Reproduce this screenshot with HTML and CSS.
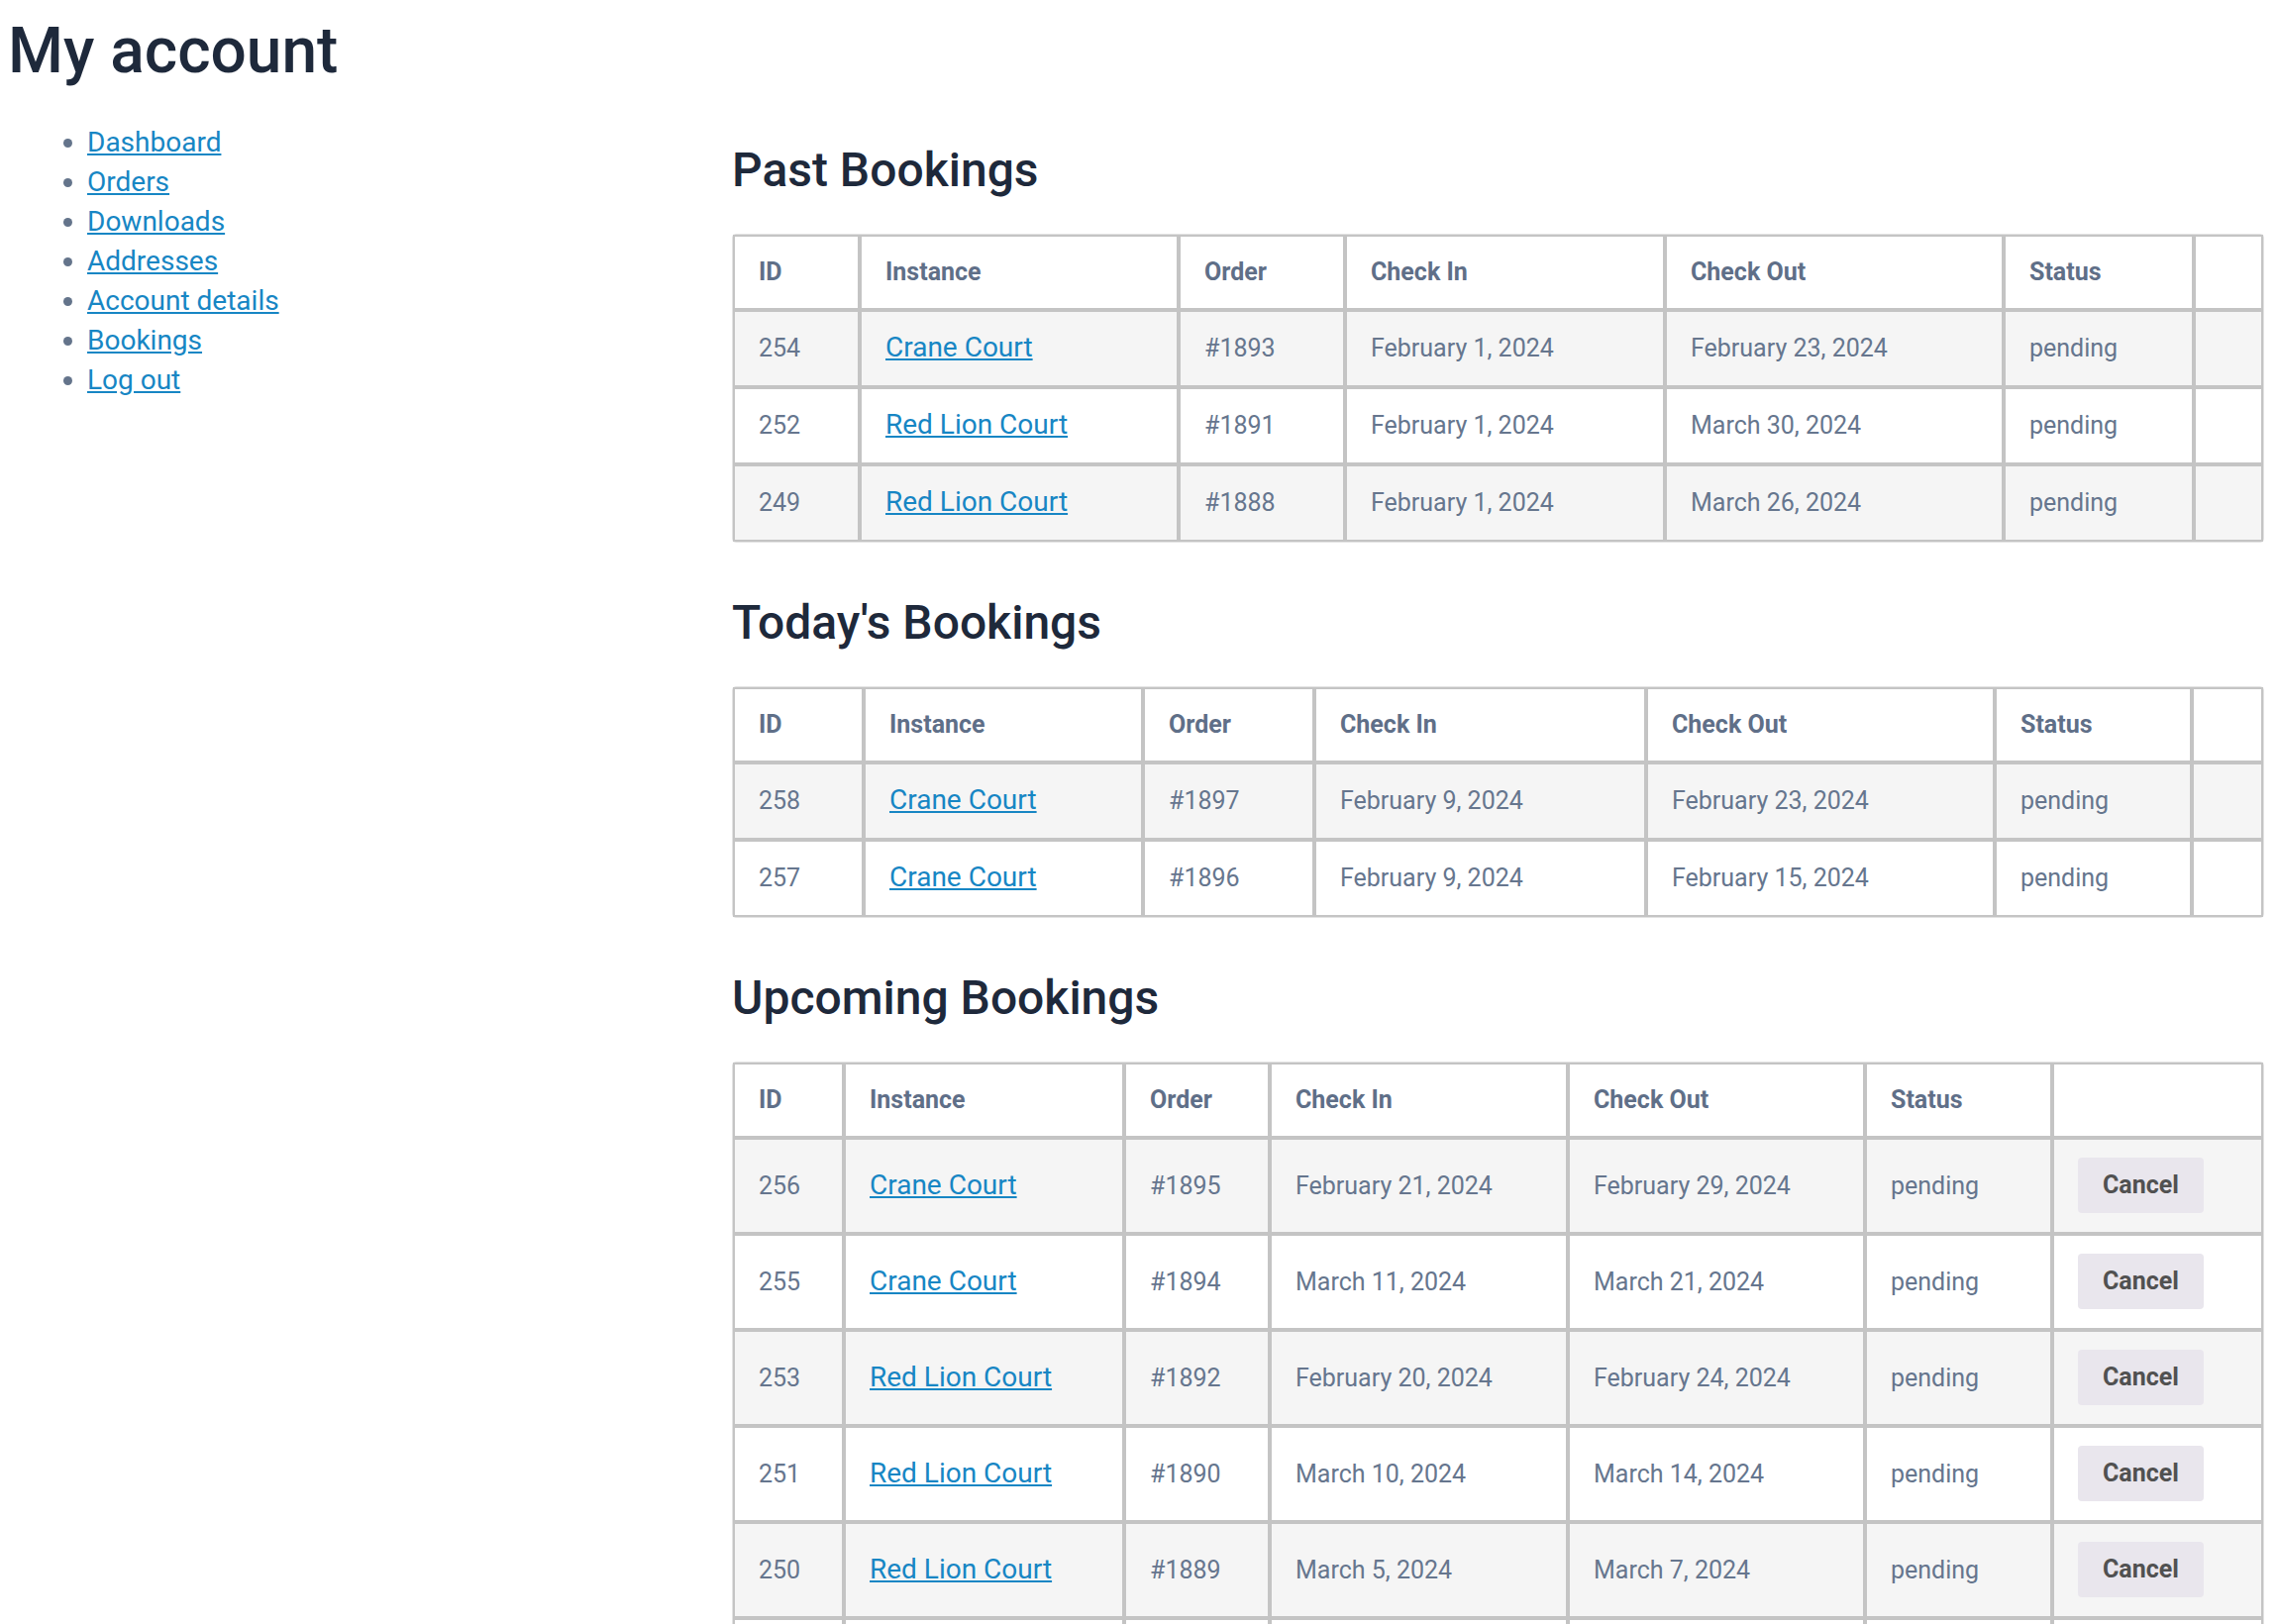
FILE: index.html
```html
<!DOCTYPE html>
<html lang="en">
<head>
<meta charset="utf-8">
<title>My account</title>
<link rel="stylesheet" href="styles.css">
</head>
<body>
<h1 class="page-title">My account</h1>
<div class="account">
  <nav class="account-nav">
    <ul>
      <li><a href="#">Dashboard</a></li>
      <li><a href="#">Orders</a></li>
      <li><a href="#">Downloads</a></li>
      <li><a href="#">Addresses</a></li>
      <li><a href="#">Account details</a></li>
      <li><a href="#">Bookings</a></li>
      <li><a href="#">Log out</a></li>
    </ul>
  </nav>
  <main class="account-content">
    <section class="bookings">
      <h2>Past Bookings</h2>
      <table class="booking-table past">
        <colgroup><col><col><col><col><col><col><col></colgroup>
        <thead>
          <tr><th>ID</th><th>Instance</th><th>Order</th><th>Check In</th><th>Check Out</th><th>Status</th><th></th></tr>
        </thead>
        <tbody>
          <tr><td>254</td><td><a href="#">Crane Court</a></td><td>#1893</td><td>February 1, 2024</td><td>February 23, 2024</td><td>pending</td><td></td></tr>
          <tr><td>252</td><td><a href="#">Red Lion Court</a></td><td>#1891</td><td>February 1, 2024</td><td>March 30, 2024</td><td>pending</td><td></td></tr>
          <tr><td>249</td><td><a href="#">Red Lion Court</a></td><td>#1888</td><td>February 1, 2024</td><td>March 26, 2024</td><td>pending</td><td></td></tr>
        </tbody>
      </table>
    </section>
    <section class="bookings">
      <h2>Today's Bookings</h2>
      <table class="booking-table today">
        <colgroup><col><col><col><col><col><col><col></colgroup>
        <thead>
          <tr><th>ID</th><th>Instance</th><th>Order</th><th>Check In</th><th>Check Out</th><th>Status</th><th></th></tr>
        </thead>
        <tbody>
          <tr><td>258</td><td><a href="#">Crane Court</a></td><td>#1897</td><td>February 9, 2024</td><td>February 23, 2024</td><td>pending</td><td></td></tr>
          <tr><td>257</td><td><a href="#">Crane Court</a></td><td>#1896</td><td>February 9, 2024</td><td>February 15, 2024</td><td>pending</td><td></td></tr>
        </tbody>
      </table>
    </section>
    <section class="bookings">
      <h2>Upcoming Bookings</h2>
      <table class="booking-table upcoming">
        <colgroup><col><col><col><col><col><col><col></colgroup>
        <thead>
          <tr><th>ID</th><th>Instance</th><th>Order</th><th>Check In</th><th>Check Out</th><th>Status</th><th></th></tr>
        </thead>
        <tbody>
          <tr><td>256</td><td><a href="#">Crane Court</a></td><td>#1895</td><td>February 21, 2024</td><td>February 29, 2024</td><td>pending</td><td class="action-cell"><button class="btn-cancel" type="button">Cancel</button></td></tr>
          <tr><td>255</td><td><a href="#">Crane Court</a></td><td>#1894</td><td>March 11, 2024</td><td>March 21, 2024</td><td>pending</td><td class="action-cell"><button class="btn-cancel" type="button">Cancel</button></td></tr>
          <tr><td>253</td><td><a href="#">Red Lion Court</a></td><td>#1892</td><td>February 20, 2024</td><td>February 24, 2024</td><td>pending</td><td class="action-cell"><button class="btn-cancel" type="button">Cancel</button></td></tr>
          <tr><td>251</td><td><a href="#">Red Lion Court</a></td><td>#1890</td><td>March 10, 2024</td><td>March 14, 2024</td><td>pending</td><td class="action-cell"><button class="btn-cancel" type="button">Cancel</button></td></tr>
          <tr><td>250</td><td><a href="#">Red Lion Court</a></td><td>#1889</td><td>March 5, 2024</td><td>March 7, 2024</td><td>pending</td><td class="action-cell"><button class="btn-cancel" type="button">Cancel</button></td></tr>
          <tr><td>248</td><td><a href="#">Crane Court</a></td><td>#1887</td><td>March 1, 2024</td><td>March 4, 2024</td><td>pending</td><td class="action-cell"><button class="btn-cancel" type="button">Cancel</button></td></tr>
        </tbody>
      </table>
    </section>
  </main>
</div>
</body>
</html>
```

FILE: styles.css
```css
* {
  box-sizing: border-box;
}

body {
  margin: 8px;
  font-family: Roboto, "Liberation Sans", Arial, sans-serif;
  color: #64748b;
  background: #ffffff;
}

a {
  color: #1786c4;
  text-decoration: underline;
}

.page-title {
  margin: 4px 0 0;
  font-size: 64px;
  line-height: 79px;
  font-weight: 500;
  color: #1e293b;
}

.account {
  display: grid;
  grid-template-columns: 731px 1547px;
  align-items: start;
}

.account-nav ul {
  margin: 33px 0 0;
  padding-left: 80px;
  font-size: 28px;
  line-height: 40px;
  color: #64748b;
}

.bookings h2 {
  margin: 53px 0 36px;
  font-size: 48px;
  line-height: 56px;
  font-weight: 500;
  color: #1e293b;
}

.booking-table {
  width: 1547px;
  table-layout: fixed;
  border-collapse: separate;
  border-spacing: 0;
  border: 1px solid #e3e3e3;
  border-radius: 4px;
  font-size: 25px;
}

.booking-table th,
.booking-table td {
  border: 2px solid #c4c4c4;
  padding: 18px 24px;
  text-align: left;
  vertical-align: middle;
  white-space: nowrap;
}

.booking-table th {
  line-height: 36px;
  font-weight: 700;
  color: #5f6f88;
  background: #ffffff;
}

.booking-table td {
  line-height: 38px;
  color: #66768e;
}

.booking-table td.action-cell {
  padding-top: 18px;
  padding-bottom: 19px;
}

.booking-table td a {
  font-size: 28px;
  line-height: 28px;
}

.booking-table tbody tr:nth-child(odd) td {
  background: #f5f5f5;
}

.booking-table tbody tr:nth-child(even) td {
  background: #ffffff;
}

.btn-cancel {
  display: inline-block;
  vertical-align: middle;
  height: 56px;
  font-family: Roboto, "Liberation Sans", Arial, sans-serif;
  font-size: 25px;
  line-height: 56px;
  font-weight: 700;
  padding: 0 25px;
  color: #515151;
  background: #e9e6ed;
  border: 0;
  border-radius: 4px;
}

/* column widths */
.past col:nth-child(1) { width: 128px; }
.past col:nth-child(2) { width: 322px; }
.past col:nth-child(3) { width: 168px; }
.past col:nth-child(4) { width: 323px; }
.past col:nth-child(5) { width: 342px; }
.past col:nth-child(6) { width: 192px; }
.past col:nth-child(7) { width: 70px; }

.today col:nth-child(1) { width: 132px; }
.today col:nth-child(2) { width: 282px; }
.today col:nth-child(3) { width: 173px; }
.today col:nth-child(4) { width: 335px; }
.today col:nth-child(5) { width: 352px; }
.today col:nth-child(6) { width: 199px; }
.today col:nth-child(7) { width: 72px; }

.upcoming col:nth-child(1) { width: 112px; }
.upcoming col:nth-child(2) { width: 283px; }
.upcoming col:nth-child(3) { width: 147px; }
.upcoming col:nth-child(4) { width: 301px; }
.upcoming col:nth-child(5) { width: 300px; }
.upcoming col:nth-child(6) { width: 189px; }
.upcoming col:nth-child(7) { width: 213px; }
```
